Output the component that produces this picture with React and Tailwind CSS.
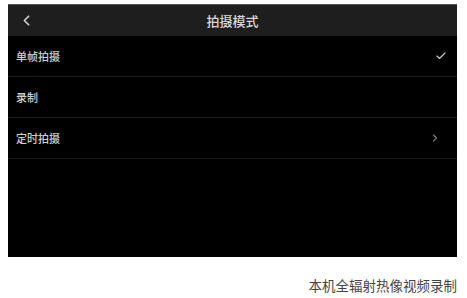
import { ChevronLeft, ChevronRight, Check } from "lucide-react";

const rows = [
  { label: "单帧拍摄", right: "check" },
  { label: "录制" },
  { label: "定时拍摄", right: "arrow" },
];

export default function App() {
  return (
    <div
      className="w-[467px] h-[298px] bg-white pt-[4px] pl-[8px]"
      style={{ fontFamily: '"Noto Sans CJK SC", "Noto Sans", sans-serif' }}
    >
      <div className="w-[449px] h-[253px] bg-black flex flex-col">
        <div className="relative h-[32px] bg-[#1e1e1e] border-t border-[#555] flex items-center justify-center">
          <ChevronLeft
            className="absolute left-[10px] top-[7px] text-[#d0d0d0]"
            size={17}
            strokeWidth={2.4}
          />
          <span className="text-[13px] font-medium text-[#d8d8d8]">拍摄模式</span>
        </div>
        {rows.map((r) => (
          <div
            key={r.label}
            className="h-[41px] flex items-center justify-between pl-[8px] pr-[10px] border-b border-[#1c1c1c]"
          >
            <span className="text-[11px] font-medium text-[#cfcfcf]">{r.label}</span>
            {r.right === "check" && (
              <Check className="text-[#d0d0d0]" size={12} strokeWidth={2.2} />
            )}
            {r.right === "arrow" && (
              <ChevronRight className="text-[#7a7a7a] mr-[6px]" size={12} strokeWidth={2.4} />
            )}
          </div>
        ))}
      </div>
      <div className="w-[449px] flex justify-end mt-[19px]">
        <span className="text-[13.5px] leading-[18px] text-[#444]">本机全辐射热像视频录制</span>
      </div>
    </div>
  );
}
